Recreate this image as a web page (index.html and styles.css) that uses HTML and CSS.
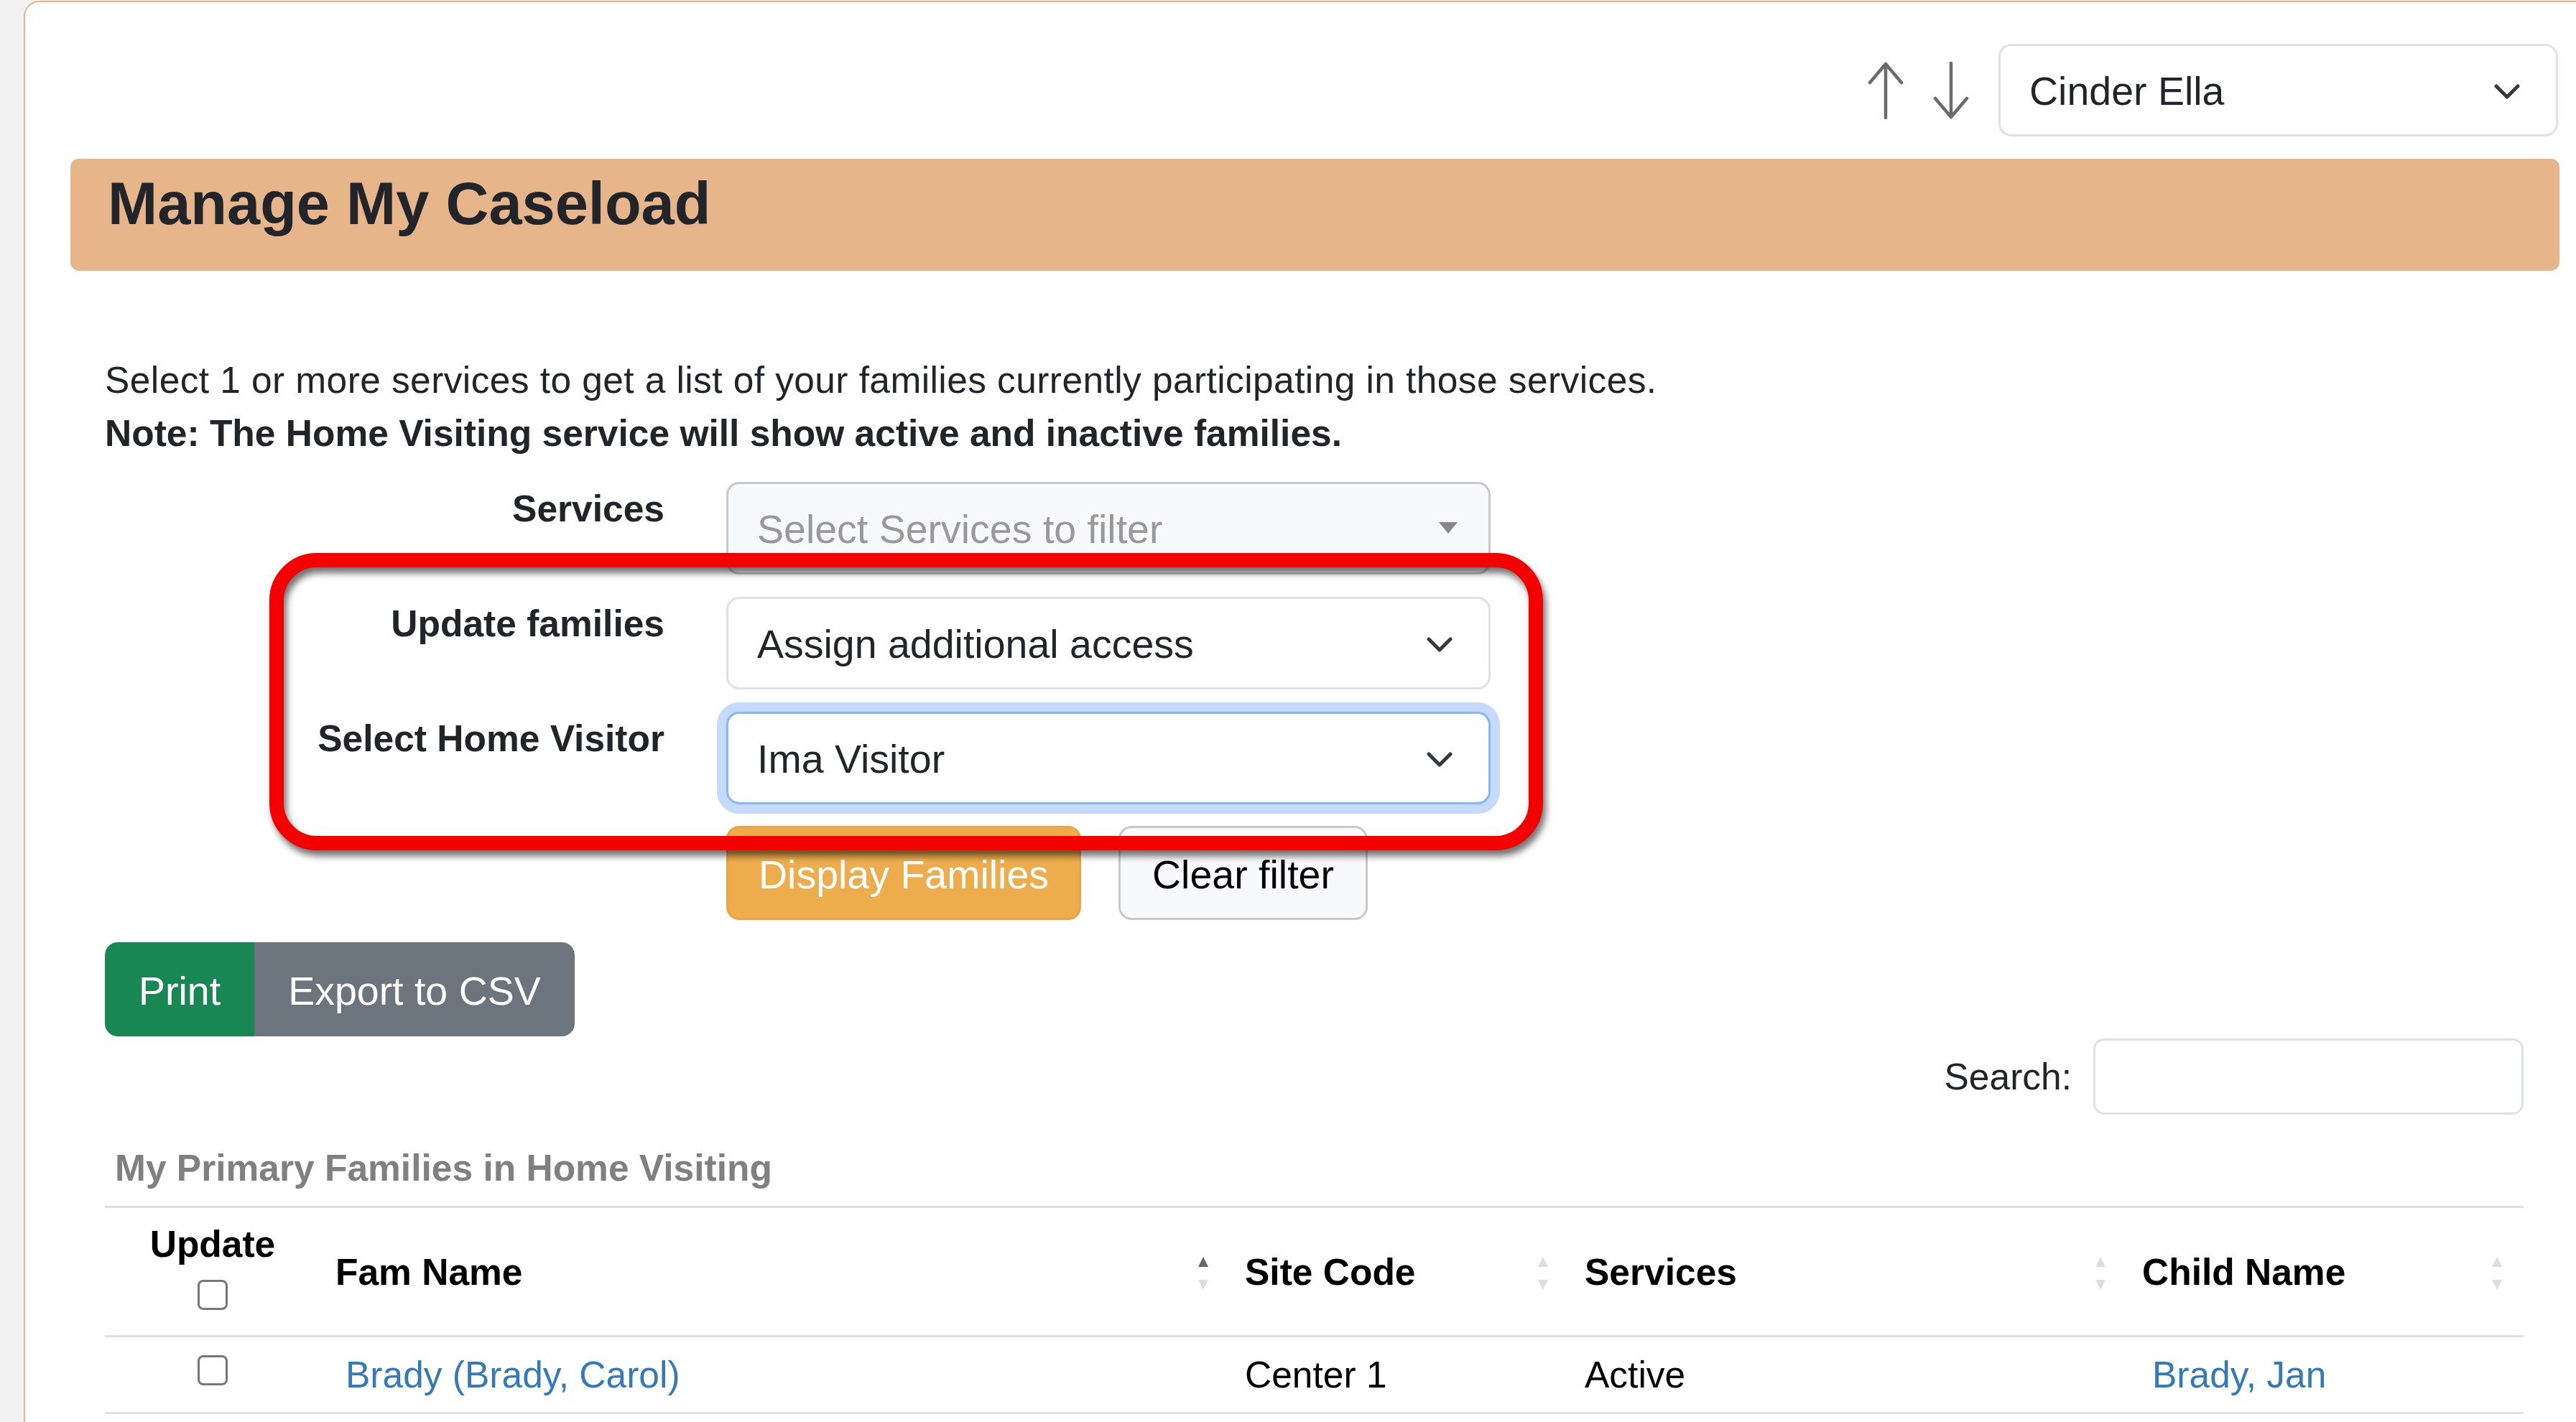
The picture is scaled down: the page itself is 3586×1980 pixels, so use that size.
FILE: index.html
```html
<!DOCTYPE html>
<html>
<head>
    <title>Manage My Caseload</title>
    <meta charset="UTF-8">
    <link rel="stylesheet" href="styles.css">
</head>
<body>
    <div class="page">
        <div class="card">
            <div class="top-bar">
                <svg class="order-arrow" width="52" height="80" viewBox="0 0 52 80">
                    <path d="M26 78 V3 M4 29 L26 3 L48 29" />
                </svg>
                <svg class="order-arrow" width="52" height="80" viewBox="0 0 52 80">
                    <path d="M26 2 V77 M4 51 L26 77 L48 51" />
                </svg>
                <div class="form-select user-select">
                    <span>Cinder Ella</span>
                    <svg class="chevron" width="36" height="22" viewBox="0 0 36 22"><path d="M3 3 L18 18 L33 3" /></svg>
                </div>
            </div>

            <div class="page-title">
                <h3>Manage My Caseload</h3>
            </div>

            <div class="content">
                <p class="intro">
                    <span class="intro-lead">Select 1 or more services to get a list of your families currently participating in those services.</span><br>
                    <strong>Note: The Home Visiting service will show active and inactive families.</strong>
                </p>

                <div class="filter-form">
                    <label>Services</label>
                    <div class="form-select services-select">
                        <span>Select Services to filter</span>
                        <span class="caret"></span>
                    </div>

                    <label>Update families</label>
                    <div class="form-select">
                        <span>Assign additional access</span>
                        <svg class="chevron" width="36" height="22" viewBox="0 0 36 22"><path d="M3 3 L18 18 L33 3" /></svg>
                    </div>

                    <label>Select Home Visitor</label>
                    <div class="form-select focused">
                        <span>Ima Visitor</span>
                        <svg class="chevron" width="36" height="22" viewBox="0 0 36 22"><path d="M3 3 L18 18 L33 3" /></svg>
                    </div>

                    <div class="button-row">
                        <button class="btn btn-warning">Display Families</button>
                        <button class="btn btn-light">Clear filter</button>
                    </div>

                    <!-- highlight around the update fields -->
                    <div class="callout"></div>
                </div>

                <div class="btn-group">
                    <button class="btn btn-success">Print</button>
                    <button class="btn btn-secondary">Export to CSV</button>
                </div>

                <div class="table-filter">
                    <label for="tableSearch">Search:</label>
                    <input type="search" id="tableSearch">
                </div>

                <div class="table-caption">My Primary Families in Home Visiting</div>
                <table class="family-table">
                    <colgroup>
                        <col style="width: 300px">
                        <col style="width: 1266px">
                        <col style="width: 473px">
                        <col style="width: 776px">
                        <col style="width: 552px">
                    </colgroup>
                    <thead>
                        <tr>
                            <th class="update-col">
                                Update
                                <input type="checkbox" class="check">
                            </th>
                            <th class="sorting sorting-asc">Fam Name</th>
                            <th class="sorting">Site Code</th>
                            <th class="sorting">Services</th>
                            <th class="sorting">Child Name</th>
                        </tr>
                    </thead>
                    <tbody>
                        <tr>
                            <td class="update-col"><input type="checkbox" class="check"></td>
                            <td><a href="#">Brady (Brady, Carol)</a></td>
                            <td>Center 1</td>
                            <td>Active</td>
                            <td><a href="#">Brady, Jan</a></td>
                        </tr>
                    </tbody>
                </table>
            </div>
        </div>
    </div>
</body>
</html>
```

FILE: styles.css
```css
body {
    margin: 0;
    background-color: #f2f2f2;
    font-family: "Liberation Sans", Arial, sans-serif;
    font-size: 51.5px;
    line-height: 74px;
    color: #212529;
    overflow: hidden;
}

.page {
    height: 1980px;
    box-sizing: border-box;
    padding: 1px 0 0 33px;
    overflow: hidden;
}

.card {
    width: 3595px;
    min-height: 2100px;
    box-sizing: border-box;
    padding: 0 63px;
    background-color: #fff;
    border: 2px solid #e6b68b;
    border-radius: 22px;
}

/* user picker row */
.top-bar {
    display: flex;
    justify-content: flex-end;
    align-items: center;
    gap: 39px;
    margin-top: 58px;
    padding-right: 2px;
}

.order-arrow path {
    fill: none;
    stroke: #6b6b6b;
    stroke-width: 4.5;
    stroke-linecap: round;
    stroke-linejoin: round;
}

.user-select {
    width: 779px;
    margin-left: 1px;
}

.page-title {
    margin-top: 31px;
    height: 156px;
    box-sizing: border-box;
    padding: 13px 52px 0;
    background-color: #e6b58a;
    border-radius: 12px;
}

.page-title h3 {
    margin: 0;
    font-size: 83px;
    line-height: 1.2;
    font-weight: bold;
    color: #212529;
}

.content {
    padding: 0 50px 0 48px;
}

.intro {
    margin: 115px 0 0;
}

.intro-lead {
    letter-spacing: 0.4px;
}

/* selects */
.form-select {
    display: flex;
    align-items: center;
    justify-content: space-between;
    height: 129px;
    box-sizing: border-box;
    padding: 4px 50px 0 40px;
    font-size: 55.5px;
    line-height: 83px;
    color: #212529;
    background-color: #fff;
    border: 3px solid #dee2e6;
    border-radius: 18px;
}

.chevron path {
    fill: none;
    stroke: #343a40;
    stroke-width: 5;
    stroke-linecap: round;
    stroke-linejoin: round;
}

.services-select {
    padding-right: 43px;
    color: #999;
    background-color: #f8f9fa;
    border-color: #c8c8c8;
}

.services-select .caret {
    width: 0;
    height: 0;
    border-left: 13px solid transparent;
    border-right: 13px solid transparent;
    border-top: 16px solid #888;
    margin-top: -6px;
}

.form-select.focused {
    border-color: #86b7fe;
    box-shadow: 0 0 0 13px #c6dafd;
}

.filter-form {
    position: relative;
    display: grid;
    grid-template-columns: 779px 1064px;
    column-gap: 86px;
    row-gap: 31px;
    margin-top: 31px;
}

.filter-form label {
    align-self: start;
    text-align: right;
    font-weight: bold;
}

.button-row {
    grid-column: 2;
    display: flex;
    gap: 52px;
    margin-top: -1px;
}

.callout {
    position: absolute;
    left: 229px;
    top: 99px;
    width: 1773px;
    height: 414px;
    box-sizing: border-box;
    border: 20px solid #f40000;
    border-radius: 66px;
    filter: drop-shadow(4px 8px 5px rgba(0, 0, 0, 0.55));
    pointer-events: none;
}

/* buttons */
.btn {
    height: 131px;
    box-sizing: border-box;
    padding: 4px 44px 0;
    font-family: inherit;
    font-size: 55.5px;
    border: 3px solid transparent;
    border-radius: 18px;
    cursor: pointer;
}

.btn-warning {
    padding: 4px 42px 0;
    background-color: #eead4d;
    border-color: #eba443;
    color: #fff;
}

.btn-light {
    background-color: #f8f9fa;
    border-color: #c8c8c8;
    color: #000;
}

.btn-success {
    background-color: #198754;
    border-color: #198754;
    color: #fff;
}

.btn-secondary {
    background-color: #6c757d;
    border-color: #6c757d;
    color: #fff;
}

.btn-group {
    display: flex;
    margin-top: 31px;
}

.btn-group .btn:first-child {
    border-radius: 18px 0 0 18px;
}

.btn-group .btn:last-child {
    border-radius: 0 18px 18px 0;
}

/* table search */
.table-filter {
    display: flex;
    justify-content: flex-end;
    align-items: center;
    gap: 30px;
    margin-top: 3px;
}

.table-filter input {
    width: 599px;
    height: 106px;
    box-sizing: border-box;
    border: 3px solid #dee2e6;
    border-radius: 15px;
    font-family: inherit;
    font-size: 51.5px;
    padding: 0 30px;
}

.table-caption {
    margin-top: 37px;
    font-weight: bold;
    color: #808080;
    padding-left: 14px;
}

/* families table */
.family-table {
    margin-top: 16px;
    width: 100%;
    table-layout: fixed;
    border-collapse: separate;
    border-spacing: 0;
    color: #000;
}

.family-table th {
    position: relative;
    padding: 0 21px;
    text-align: left;
    vertical-align: middle;
    font-weight: bold;
    border-top: 3px solid #dee2e6;
    border-bottom: 3px solid #dee2e6;
}

.family-table th.update-col {
    padding: 13px 0 35px;
    text-align: center;
}

.family-table td {
    padding: 15px 21px;
    border-bottom: 3px solid #dee2e6;
}

.family-table td.update-col {
    padding: 15px 0;
    vertical-align: top;
}

.family-table a {
    color: #337ab7;
    text-decoration: none;
    padding-left: 14px;
}

.check {
    appearance: none;
    display: block;
    width: 42px;
    height: 42px;
    margin: 13px auto 0;
    box-sizing: border-box;
    border: 3px solid #777;
    border-radius: 8px;
    background-color: #fff;
}

td .check {
    margin-top: 10px;
}

/* sort arrows */
.sorting::before,
.sorting::after {
    content: "";
    position: absolute;
    right: 30px;
    top: 50%;
    width: 0;
    height: 0;
    border-left: 7px solid transparent;
    border-right: 7px solid transparent;
}

.sorting::before {
    margin-top: -21px;
    border-bottom: 14px solid #dedede;
}

.sorting::after {
    margin-top: 11px;
    border-top: 14px solid #dedede;
}

.sorting-asc::before {
    border-bottom-color: #666;
}
```
